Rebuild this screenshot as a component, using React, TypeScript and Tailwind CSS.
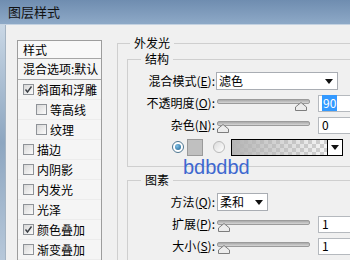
import React from 'react';

const Check = () => (
  <svg width="9" height="9" viewBox="0 0 9 9">
    <path d="M1.5 4.5 L3.5 7 L7.5 1.5" fill="none" stroke="#3a3f45" strokeWidth="1.4" />
  </svg>
);

const Checkbox = ({ checked }: { checked?: boolean }) => (
  <span className="flex w-[11px] h-[11px] shrink-0 items-center justify-center border border-[#8f9398] bg-gradient-to-br from-[#d8d8d8] to-[#fbfbfb]">
    {checked && <Check />}
  </span>
);

const ListRow = ({ label, checked, indent }: { label: string; checked?: boolean; indent?: boolean }) => (
  <div className={`flex h-[20px] items-center gap-[3px] border-b border-[#ececec] ${indent ? 'pl-[18px]' : 'pl-[5px]'}`}>
    <Checkbox checked={checked} />
    <span className="whitespace-nowrap">{label}</span>
  </div>
);

const Arrow = () => (
  <svg width="8" height="5" viewBox="0 0 8 5">
    <path d="M0 0 H8 L4 5 Z" fill="#111" />
  </svg>
);

const Select = ({ value, w }: { value: string; w: string }) => (
  <div className={`flex h-[18px] ${w} items-center justify-between border border-[#a9adb3] bg-white pl-[2px] pr-[4px]`}>
    <span>{value}</span>
    <Arrow />
  </div>
);

const Slider = ({ thumb }: { thumb: number }) => (
  <div className="relative h-[16px] w-[93px] shrink-0">
    <div className="absolute left-0 right-0 top-[4px] h-[5px] rounded-[2px] border border-[#9b9b9b] bg-gradient-to-b from-[#a9a9a9] to-[#d6d6d6]" />
    <svg className="absolute top-[7px]" style={{ left: thumb }} width="12" height="9" viewBox="0 0 12 9">
      <path d="M6 0.5 L11.5 5 V8.5 H0.5 V5 Z" fill="#ececec" stroke="#7d7d7d" />
    </svg>
  </div>
);

const Field = ({ children }: { children: React.ReactNode }) => (
  <div className="ml-[8px] flex h-[17px] w-[44px] items-center border border-[#b5b9be] bg-white pl-[3px]">{children}</div>
);

const Label = ({ text, k }: { text: string; k: string }) => (
  <span className="w-[87px] shrink-0 text-right whitespace-nowrap">
    {text}(<span className="underline">{k}</span>):
  </span>
);

const Radio = ({ on }: { on?: boolean }) => (
  <span
    className={`flex h-[12px] w-[12px] shrink-0 items-center justify-center rounded-full border ${
      on ? 'border-[#4d7590] bg-white' : 'border-[#b9b9b9] bg-gradient-to-br from-[#dcdcdc] to-white'
    }`}
  >
    {on && <span className="h-[6px] w-[6px] rounded-full bg-[radial-gradient(circle_at_35%_35%,#7fc0e6,#1b5f8f)]" />}
  </span>
);

export default function App() {
  return (
    <div className="relative h-[260px] w-[350px] overflow-hidden bg-[#f0f0f0] font-['Noto_Sans_CJK_SC','Liberation_Sans',sans-serif] text-[12px] leading-[16px] text-black">
      {/* title bar */}
      <div className="flex h-[25px] items-center border-b border-[#c4d2e1] bg-gradient-to-b from-[#6f8db0] to-[#8ea9c7] pl-[8px] text-[13px] text-[#111]">
        图层样式
      </div>

      <div className="flex">
        <div className="h-[235px] w-[6px] shrink-0 border-r border-[#a4b3c2] bg-gradient-to-b from-[#c9d7e5] via-[#8da6c0] to-[#b7c8da]" />

        {/* style list */}
        <div className="w-[111px] shrink-0 pl-[11px] pt-[15px]">
          <div className="h-[240px] w-[85px] overflow-hidden border border-[#9d9d9d] bg-[#f5f5f5]">
            <div className="flex h-[18px] items-center border-b border-[#a6a6a6] bg-[#f8f8f8] pl-[5px]">样式</div>
            <div className="flex h-[21px] items-center border-b border-[#a6a6a6] pl-[5px] whitespace-nowrap">混合选项:默认</div>
            <ListRow label="斜面和浮雕" checked />
            <ListRow label="等高线" indent />
            <ListRow label="纹理" indent />
            <ListRow label="描边" />
            <ListRow label="内阴影" />
            <ListRow label="内发光" />
            <ListRow label="光泽" />
            <ListRow label="颜色叠加" checked />
            <ListRow label="渐变叠加" />
          </div>
        </div>

        {/* settings */}
        <div className="pt-[10px]">
          <fieldset className="w-[260px] border-l border-t border-[#cfcfcf]">
            <legend className="ml-[12px] px-[4px]">外发光</legend>

            <fieldset className="ml-[9px] border border-[#cfcfcf] pb-[8px] pt-[3px]">
              <legend className="ml-[13px] px-[4px]">结构</legend>
              <div className="flex h-[22px] items-center">
                <Label text="混合模式" k="E" />
                <span className="ml-[1px]"><Select value="滤色" w="w-[122px]" /></span>
              </div>
              <div className="flex h-[22px] items-center">
                <Label text="不透明度" k="O" />
                <span className="ml-[2px]"><Slider thumb={78} /></span>
                <Field><span className="bg-[#3399ff] px-[1px] text-white">90</span></Field>
              </div>
              <div className="flex h-[22px] items-center">
                <Label text="杂色" k="N" />
                <span className="ml-[2px]"><Slider thumb={0} /></span>
                <Field>0</Field>
              </div>
              <div className="flex h-[22px] items-center pl-[44px]">
                <Radio on />
                <span className="ml-[3px] h-[17px] w-[16px] border border-[#9a9a9a] bg-[#c0c0c0]" />
                <span className="ml-[10px]"><Radio /></span>
                <div className="ml-[6px] flex h-[17px] w-[112px] border border-black">
                  <div className="relative flex-1 bg-[repeating-conic-gradient(#cfcfcf_0_25%,#f6f6f6_0_50%)] bg-[length:8px_8px]">
                    <div className="absolute inset-0 bg-gradient-to-r from-[#b4b4b4] to-transparent" />
                  </div>
                  <div className="flex w-[15px] items-center justify-center border-l border-black bg-white">
                    <Arrow />
                  </div>
                </div>
              </div>
            </fieldset>

            <fieldset className="ml-[9px] mt-[5px] h-[100px] border border-[#cfcfcf] pt-[3px]">
              <legend className="ml-[13px] px-[4px]">图素</legend>
              <div className="flex h-[22px] items-center">
                <Label text="方法" k="Q" />
                <span className="ml-[2px]"><Select value="柔和" w="w-[51px]" /></span>
              </div>
              <div className="flex h-[22px] items-center">
                <Label text="扩展" k="P" />
                <span className="ml-[2px]"><Slider thumb={1} /></span>
                <Field>1</Field>
              </div>
              <div className="flex h-[22px] items-center">
                <Label text="大小" k="S" />
                <span className="ml-[2px]"><Slider thumb={1} /></span>
                <Field>1</Field>
              </div>
            </fieldset>
          </fieldset>
        </div>
      </div>

      {/* annotation */}
      <div className="absolute left-[183px] top-[157px] font-['Liberation_Sans',sans-serif] text-[20px] leading-[20px] text-[#3e68cf]">
        bdbdbd
      </div>
    </div>
  );
}
